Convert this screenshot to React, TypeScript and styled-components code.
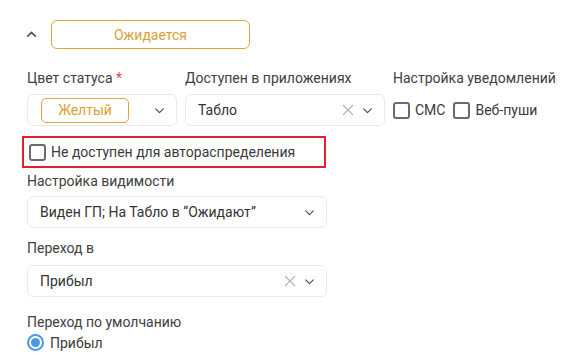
import React from 'react';
import styled, { createGlobalStyle } from 'styled-components';

const GlobalStyle = createGlobalStyle`
  body {
    margin: 0;
    background: #ffffff;
    font-family: Roboto, 'Liberation Sans', sans-serif;
    color: #3a3a3a;
  }
`;

const Page = styled.div`
  padding: 20px 0 0 27px;
  width: 584px;
  height: 364px;
  box-sizing: border-box;
`;

const Header = styled.div`
  display: flex;
  align-items: center;
  height: 29px;
  margin-left: -2px;
`;

const Collapse = styled.span`
  display: flex;
  width: 16px;
  margin-right: 10px;
  color: #555;
`;

const StatusButton = styled.button`
  width: 199px;
  height: 29px;
  border: 1px solid #e0a53c;
  border-radius: 6px;
  background: #fff;
  color: #dd9f35;
  font-family: Roboto, 'Liberation Sans', sans-serif;
  font-size: 14px;
`;

const Row = styled.div`
  display: flex;
  margin-top: 20px;
`;

const Field = styled.div<{ $w?: number; $gap?: number }>`
  display: flex;
  flex-direction: column;
  width: ${(p) => (p.$w ? `${p.$w}px` : 'auto')};
  margin-right: ${(p) => p.$gap ?? 0}px;
`;

const Label = styled.div<{ $top?: number }>`
  font-size: 14px;
  line-height: 18px;
  color: #404040;
  margin-top: ${(p) => p.$top ?? 0}px;
  white-space: nowrap;
`;

const Required = styled.span`
  color: #e5484d;
`;

const Select = styled.div<{ $w?: number; $top?: number }>`
  display: flex;
  align-items: center;
  box-sizing: border-box;
  width: ${(p) => (p.$w ? `${p.$w}px` : '100%')};
  height: 32px;
  margin-top: ${(p) => p.$top ?? 7}px;
  padding: 0 10px 0 12px;
  border: 1px solid #e8eaee;
  border-radius: 6px;
  font-size: 14px;
  color: #333;
`;

const Value = styled.span`
  flex: 1;
  white-space: nowrap;
`;

const Tag = styled.span`
  display: inline-flex;
  align-items: center;
  justify-content: center;
  box-sizing: border-box;
  width: 88px;
  height: 25px;
  margin-left: 1px;
  border: 1px solid #e0a53c;
  border-radius: 5px;
  color: #dd9f35;
  font-size: 14px;
`;

const Icons = styled.span`
  display: flex;
  align-items: center;
  gap: 6px;
`;

const Checks = styled.div`
  display: flex;
  align-items: center;
  height: 32px;
  margin-top: 7px;
  gap: 8px;
`;

const CheckLabel = styled.label`
  display: flex;
  align-items: center;
  gap: 5px;
  font-size: 14px;
  color: #3a3a3a;
`;

const Box = styled.span`
  display: inline-block;
  box-sizing: border-box;
  width: 17px;
  height: 17px;
  border: 2px solid #6b6b6b;
  border-radius: 3px;
`;

const Highlight = styled.div`
  display: flex;
  align-items: center;
  box-sizing: border-box;
  width: 304px;
  height: 32px;
  margin: 10px 0 0 -5px;
  padding-left: 5px;
  border: 2px solid #e3202a;
  font-size: 14px;
`;

const Radio = styled.span`
  display: inline-flex;
  align-items: center;
  justify-content: center;
  box-sizing: border-box;
  width: 17px;
  height: 17px;
  border: 2px solid #4a98e6;
  border-radius: 50%;

  &::after {
    content: '';
    width: 9px;
    height: 9px;
    border-radius: 50%;
    background: #4a98e6;
  }
`;

const RadioRow = styled.div`
  display: flex;
  align-items: center;
  gap: 6px;
  margin-top: 3px;
  font-size: 14px;
`;

const Chevron = ({ up }: { up?: boolean }) => (
  <svg width="13" height="13" viewBox="0 0 24 24" fill="none" stroke={up ? '#555' : '#444'} strokeWidth={up ? 3 : 2} strokeLinecap="round" strokeLinejoin="round">
    <path d={up ? 'M5 15l7-7 7 7' : 'M5 9l7 7 7-7'} />
  </svg>
);

const Clear = () => (
  <svg width="14" height="14" viewBox="0 0 24 24" fill="none" stroke="#a3adb8" strokeWidth="2" strokeLinecap="round">
    <path d="M4 4l16 16M20 4L4 20" />
  </svg>
);

const App: React.FC = () => {
  return (
    <Page>
      <GlobalStyle />
      <Header>
        <Collapse>
          <Chevron up />
        </Collapse>
        <StatusButton>Ожидается</StatusButton>
      </Header>

      <Row>
        <Field $w={150} $gap={8}>
          <Label>
            Цвет статуса <Required>*</Required>
          </Label>
          <Select>
            <Value>
              <Tag>Желтый</Tag>
            </Value>
            <Icons>
              <Chevron />
            </Icons>
          </Select>
        </Field>
        <Field $w={200} $gap={8}>
          <Label>Доступен в приложениях</Label>
          <Select>
            <Value>Табло</Value>
            <Icons>
              <Clear />
              <Chevron />
            </Icons>
          </Select>
        </Field>
        <Field>
          <Label>Настройка уведомлений</Label>
          <Checks>
            <CheckLabel>
              <Box />
              СМС
            </CheckLabel>
            <CheckLabel>
              <Box />
              Веб-пуши
            </CheckLabel>
          </Checks>
        </Field>
      </Row>

      <Highlight>
        <CheckLabel>
          <Box />
          Не доступен для автораспределения
        </CheckLabel>
      </Highlight>

      <Label $top={4}>Настройка видимости</Label>
      <Select $w={300} $top={6}>
        <Value>Виден ГП; На Табло в “Ожидают”</Value>
        <Icons>
          <Chevron />
        </Icons>
      </Select>

      <Label $top={11}>Переход в</Label>
      <Select $w={300} $top={8}>
        <Value>Прибыл</Value>
        <Icons>
          <Clear />
          <Chevron />
        </Icons>
      </Select>

      <Label $top={16}>Переход по умолчанию</Label>
      <RadioRow>
        <Radio />
        Прибыл
      </RadioRow>
    </Page>
  );
};

export default App;
